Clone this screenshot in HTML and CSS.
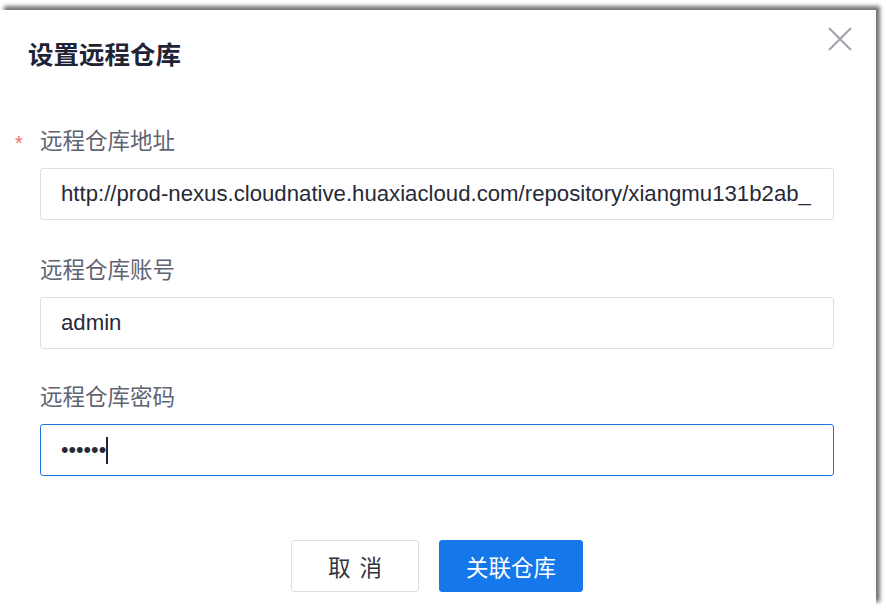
FILE: index.html
```html
<!DOCTYPE html>
<html lang="zh">
<head>
<meta charset="utf-8">
<title>设置远程仓库</title>
<link rel="stylesheet" href="styles.css">
</head>
<body>
<div class="dialog">
  <div class="dialog-header">
    <h2 class="dialog-title">设置远程仓库</h2>
    <button class="close-btn" aria-label="关闭">
      <svg width="24" height="24" viewBox="0 0 24 24"><path d="M1 1 L23 23 M23 1 L1 23" stroke="#9ea3ad" stroke-width="2" fill="none"/></svg>
    </button>
  </div>
  <div class="dialog-body">
    <div class="form-item">
      <label class="form-label required">远程仓库地址</label>
      <div class="input">http://prod-nexus.cloudnative.huaxiacloud.com/repository/xiangmu131b2ab_</div>
    </div>
    <div class="form-item">
      <label class="form-label">远程仓库账号</label>
      <div class="input">admin</div>
    </div>
    <div class="form-item">
      <label class="form-label">远程仓库密码</label>
      <div class="input focused"><span class="dots">••••••</span><span class="caret"></span></div>
    </div>
  </div>
  <div class="dialog-footer">
    <button class="btn btn-default">取 消</button>
    <button class="btn btn-primary">关联仓库</button>
  </div>
</div>
</body>
</html>
```
FILE: styles.css
```css
html, body {
  margin: 0;
  padding: 0;
  background: #ffffff;
}
body {
  font-family: "Liberation Sans", "Noto Sans CJK SC", sans-serif;
  overflow: hidden;
}
.dialog {
  margin-top: 10px;
  width: 876px;
  height: 596px;
  background: #ffffff;
  box-shadow: 4px -4px 4px rgba(0, 0, 0, 0.55);
  box-sizing: border-box;
  position: relative;
}
.dialog-header {
  display: flex;
  justify-content: space-between;
  align-items: flex-start;
  padding: 26px 24px 0 28px;
  height: 88px;
  box-sizing: border-box;
}
.dialog-title {
  margin: 0;
  font-family: "Noto Sans CJK SC", sans-serif;
  font-size: 25.5px;
  font-weight: 700;
  line-height: 34px;
  color: #1f2335;
}
.close-btn {
  border: 0;
  background: none;
  padding: 0;
  margin-top: -9px;
  width: 24px;
  height: 24px;
  cursor: pointer;
}
.close-btn svg { display: block; }
.dialog-body {
  padding: 26px 42px 0 40px;
}
.form-item {
  margin-bottom: 33px;
}
.form-item:last-child {
  margin-top: -2px;
  margin-bottom: 0;
}
.form-label {
  display: block;
  position: relative;
  font-family: "Noto Sans CJK SC", sans-serif;
  font-size: 22.5px;
  line-height: 30px;
  color: #5f6473;
  margin-bottom: 14px;
}
.form-label.required::before {
  content: "*";
  position: absolute;
  left: -25px;
  top: 4px;
  color: #f56c6c;
  font-family: "Liberation Sans", sans-serif;
  font-size: 20px;
}
.input {
  height: 52px;
  box-sizing: border-box;
  border: 1px solid #dcdfe6;
  border-radius: 3px;
  padding: 0 20px;
  display: flex;
  align-items: center;
  font-size: 22.2px;
  color: #262a36;
  white-space: nowrap;
  overflow: hidden;
}
.input.focused {
  border-color: #1f75db;
}
.dots {
  font-size: 21.5px;
}
.caret {
  display: inline-block;
  width: 2px;
  height: 27px;
  background: #1f2335;
}
.dialog-footer {
  display: flex;
  justify-content: center;
  gap: 20px;
  margin-top: 64px;
  padding-right: 2px;
}
.btn {
  height: 52px;
  border-radius: 3px;
  font-family: "Noto Sans CJK SC", sans-serif;
  font-size: 22.5px;
  cursor: pointer;
  box-sizing: border-box;
}
.btn-default {
  width: 128px;
  background: #ffffff;
  border: 1px solid #dcdfe6;
  color: #2f3442;
  word-spacing: 4px;
}
.btn-primary {
  width: 144px;
  background: #1478ea;
  border: 1px solid #1478ea;
  color: #ffffff;
}
```
